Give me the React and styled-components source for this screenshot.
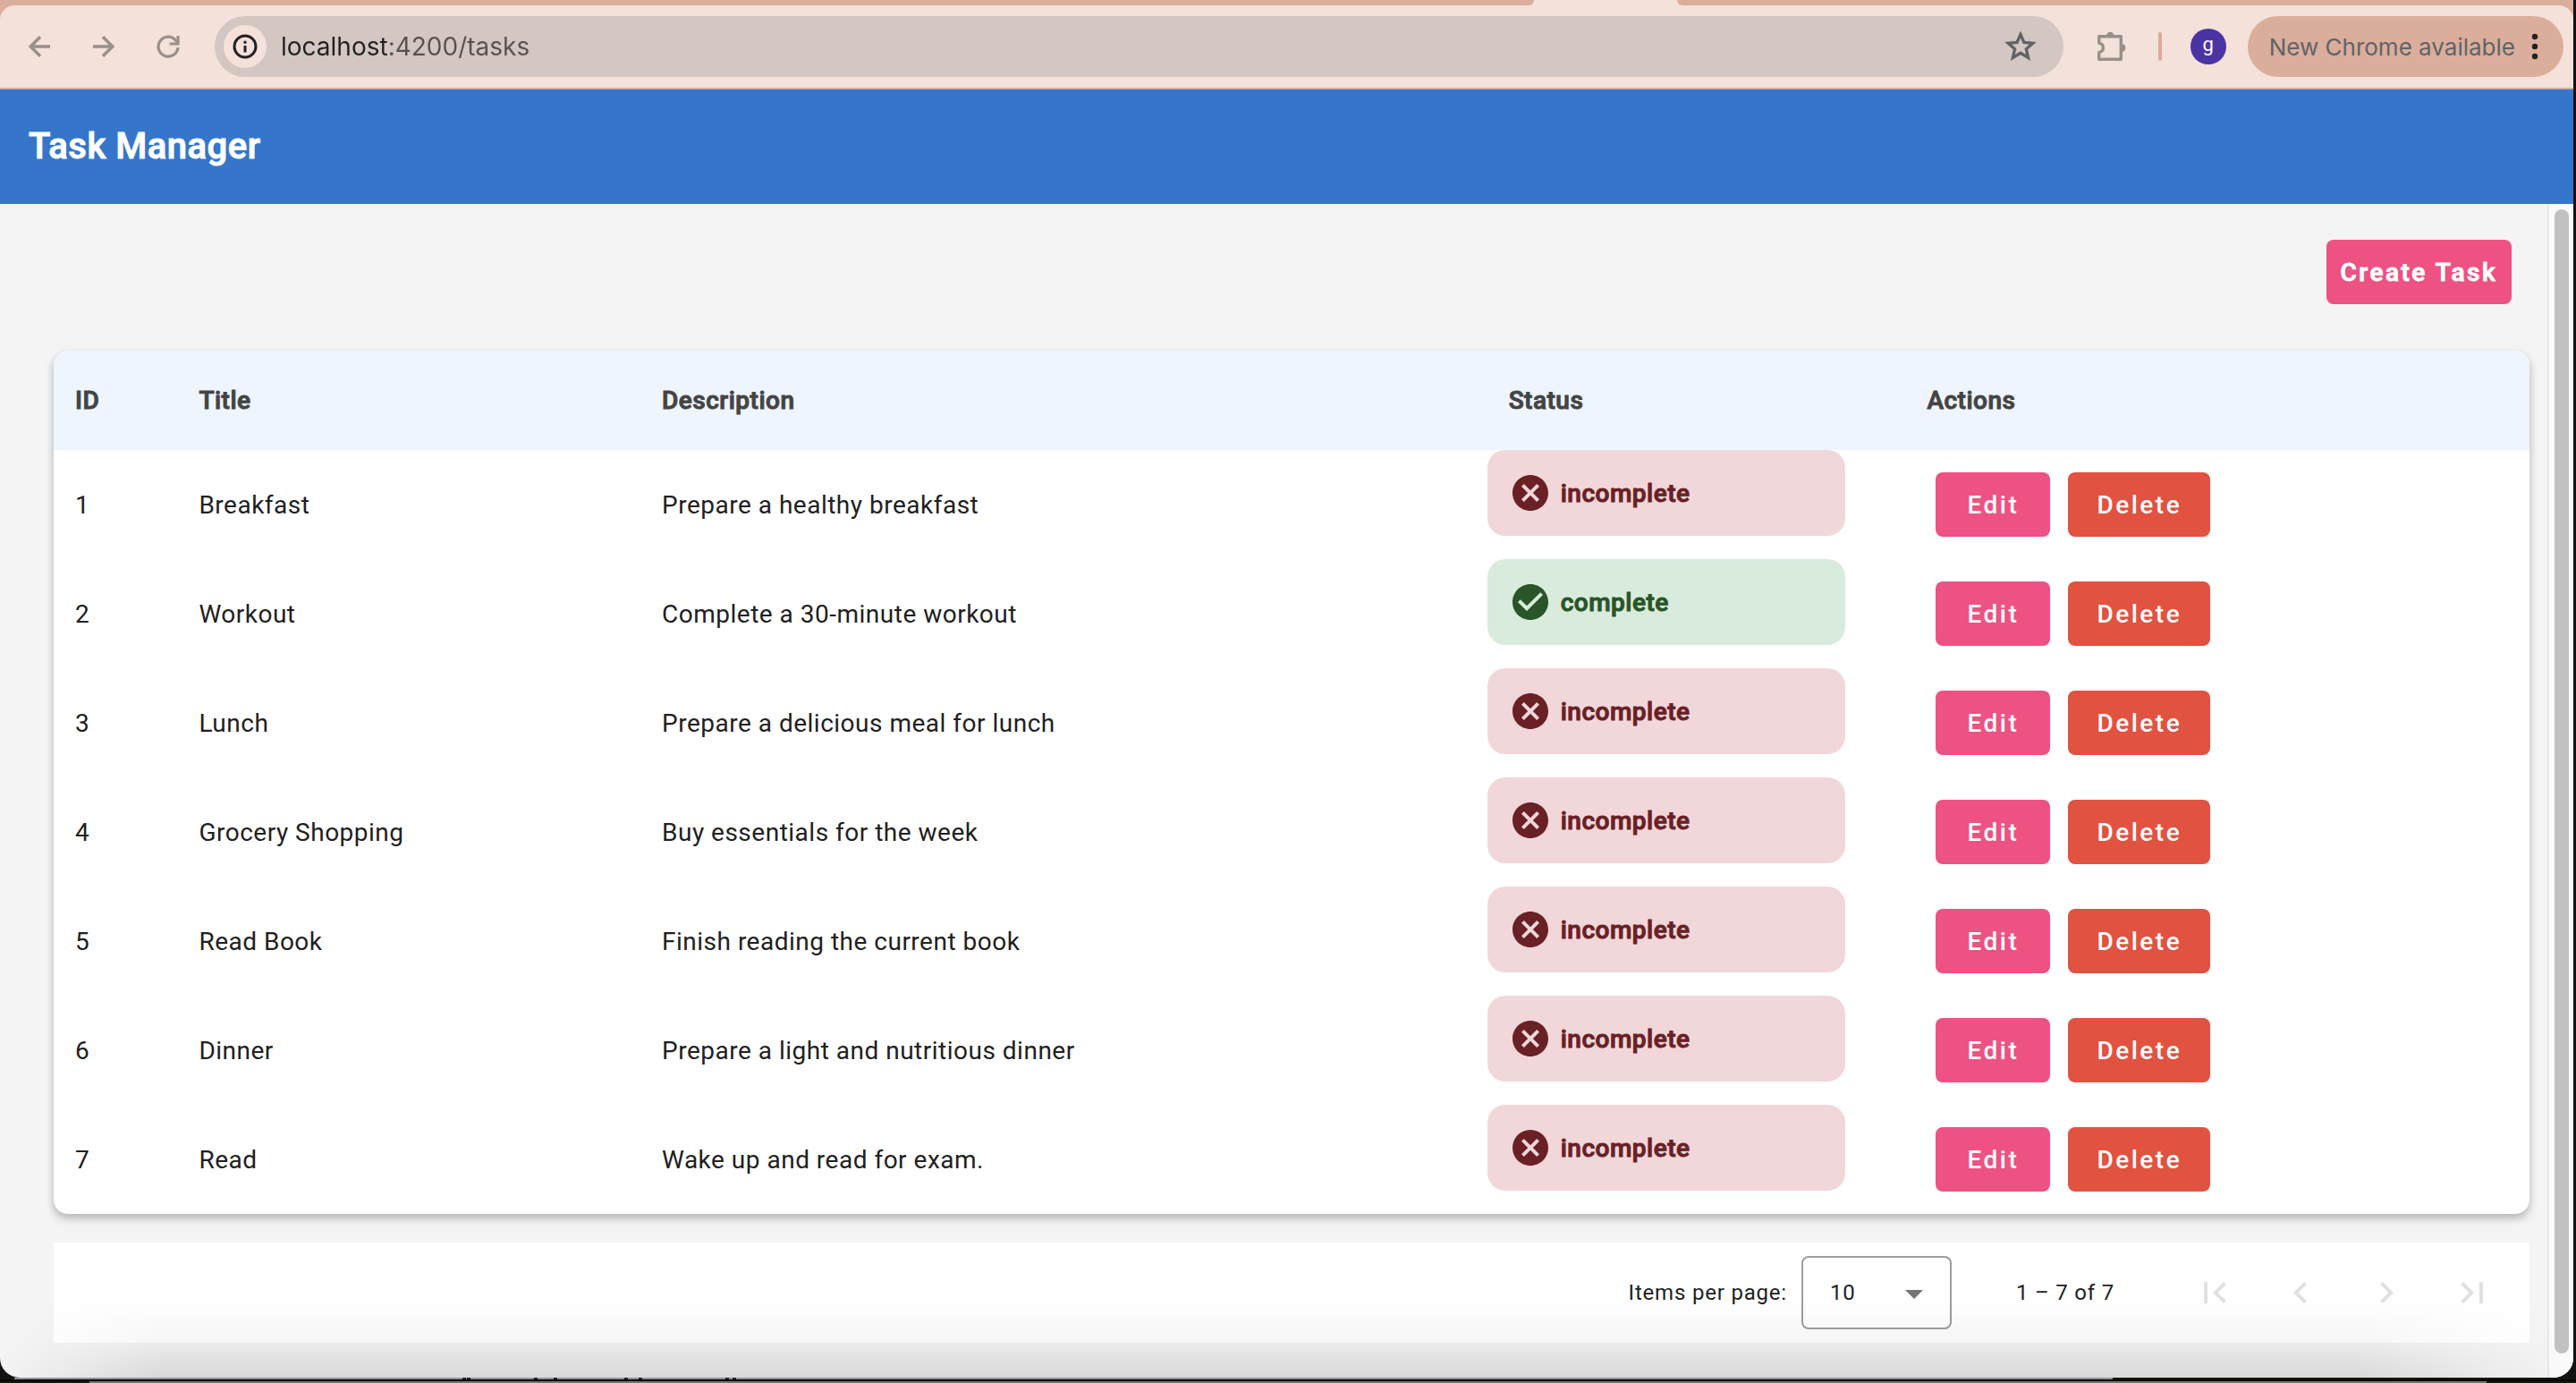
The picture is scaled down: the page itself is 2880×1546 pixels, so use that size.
import React from "react";
import styled, { createGlobalStyle, css } from "styled-components";
import {
  MdCancel,
  MdCheckCircle,
  MdChevronLeft,
  MdChevronRight,
  MdFirstPage,
  MdLastPage,
} from "react-icons/md";

const GlobalStyle = createGlobalStyle`
  *, *::before, *::after { box-sizing: border-box; }
  body {
    margin: 0;
    background: #0b0c08;
    font-family: Roboto, "Liberation Sans", sans-serif;
    color: #212121;
    overflow: hidden;
  }
  button, input, select { font: inherit; margin: 0; }
`;

/* Medium weight thickened by a thin outline in the text colour */
const strong = css`
  font-weight: 500;
  -webkit-text-stroke: 1px currentColor;
`;

const Desktop = styled.div`
  display: flex;
  flex-direction: column;
  min-height: 100vh;
  background: #101214;
`;

const Window = styled.div`
  position: relative;
  flex: 1;
  display: flex;
  flex-direction: column;
  margin-right: 3px;
  border-radius: 0 0 22px 22px;
  overflow: hidden;
  background: #f4f4f4;
`;

/* Browser chrome */

const Chrome = styled.header`
  background: #dbad9b;
`;

const TabStrip = styled.div`
  display: flex;
  gap: 160px;
  height: 6px;
  background: #f3e1da;
`;

const TabSegment = styled.div`
  flex: ${(p) => p.$grow} 1 0;
  background: #dbad9b;
  border-radius: ${(p) => (p.$side === "left" ? "0 0 16px 0" : "0 0 0 16px")};
`;

const Toolbar = styled.div`
  display: flex;
  align-items: center;
  height: 94px;
  padding: 0 11px 0 20px;
  background: #f3e1da;
  border-bottom: 2px solid #c6b3ac;
  border-radius: 16px 16px 0 0;
`;

const NavButtons = styled.div`
  display: flex;
  gap: 24px;
  margin-right: 28px;
`;

const IconButton = styled.button`
  display: grid;
  place-items: center;
  width: 48px;
  height: 48px;
  padding: 0;
  border: 0;
  border-radius: 50%;
  background: ${(p) => p.$background || "transparent"};
  color: ${(p) => p.$color || "#998f8b"};
`;

const AddressBar = styled.div`
  flex: 1;
  display: flex;
  align-items: center;
  gap: 16px;
  height: 68px;
  padding: 0 24px 0 10px;
  border-radius: 34px;
  background: #d4c6c0;
`;

const AddressInput = styled.input`
  flex: 1;
  min-width: 0;
  height: 48px;
  padding: 0;
  border: 0;
  outline: 0;
  font-family: Inter, "Liberation Sans", sans-serif;
  font-size: 28px;
  color: #202124;
  background: linear-gradient(to right, #202124 121px, #575150 121px);
  background-clip: text;
  -webkit-text-fill-color: transparent;
`;

const ToolbarEnd = styled.div`
  display: flex;
  align-items: center;
  gap: 24px;
  margin-left: 30px;
`;

const Divider = styled.span`
  width: 4px;
  height: 32px;
  margin: 0 8px 0 4px;
  border-radius: 2px;
  background: #dbad9b;
`;

const Avatar = styled.button`
  width: 40px;
  height: 40px;
  padding: 0 0 4px;
  border: 0;
  border-radius: 50%;
  background: #4a33a3;
  color: #fff;
  font-size: 22px;
  line-height: 32px;
`;

const UpdateButton = styled.button`
  display: flex;
  align-items: center;
  justify-content: space-between;
  gap: 18px;
  height: 68px;
  padding: 0 28px 0 24px;
  border: 0;
  border-radius: 34px;
  background: #dbad9b;
  color: #5f6368;
  font-family: Inter, "Liberation Sans", sans-serif;
  font-size: 26px;
  white-space: nowrap;
`;

/* Application */

const AppBar = styled.div`
  display: flex;
  align-items: center;
  height: 128px;
  padding: 0 32px;
  background: #3576cb;
  color: #fff;
`;

const AppTitle = styled.h1`
  margin: 0;
  font-size: 40px;
  line-height: 64px;
  letter-spacing: 0.5px;
  ${strong}
`;

const Viewport = styled.div`
  flex: 1;
  display: flex;
`;

const Main = styled.main`
  flex: 1;
  min-width: 0;
  padding: 40px 20px 38px 60px;
`;

const ScrollTrack = styled.div`
  width: 29px;
  display: flex;
  padding: 6px 5px 27px 6px;
  border-left: 2px solid #e8e8e8;
  background: #fafafa;
`;

const ScrollThumb = styled.div`
  flex: 1;
  border-radius: 8px;
  background: #c1c1c1;
`;

const Actions = styled.div`
  display: flex;
  justify-content: flex-end;
  padding: 0 20px;
  margin-bottom: 52px;
`;

const Button = styled.button`
  min-width: 128px;
  height: 72px;
  padding: 0 ${(p) => (p.$strong ? 16 : 32)}px;
  border: 0;
  border-radius: 8px;
  background: ${(p) => (p.$tone === "danger" ? "#e15241" : "#ed5282")};
  color: #fff;
  font-size: 28px;
  font-weight: 500;
  letter-spacing: 2.5px;
  white-space: nowrap;
  ${(p) => p.$strong && strong}
`;

const Card = styled.div`
  border-radius: 16px;
  overflow: hidden;
  background: #fff;
  box-shadow: 0 4px 8px rgba(0, 0, 0, 0.16), 0 6px 12px rgba(0, 0, 0, 0.12);
`;

const Table = styled.table`
  width: 100%;
  border-collapse: collapse;
  table-layout: fixed;
`;

const Column = styled.col`
  width: ${(p) => p.$width};
`;

const HeadCell = styled.th`
  height: 111px;
  padding: 0 24px;
  background: #eef5fd;
  color: #444;
  font-size: 28px;
  letter-spacing: 0.5px;
  text-align: left;
  ${strong}
`;

const Cell = styled.td`
  height: 122px;
  padding: 0 24px;
  font-size: 28px;
  letter-spacing: 0.5px;
`;

const StatusCell = styled.td`
  padding: 0;
  vertical-align: top;
`;

const tones = {
  complete: { background: "#d9ebdc", color: "#295528" },
  incomplete: { background: "#f2d7da", color: "#692125" },
};

const StatusChip = styled.div`
  display: flex;
  align-items: center;
  gap: 10px;
  max-width: 400px;
  height: 96px;
  padding: 0 24px;
  border-radius: 20px;
  background: ${(p) => tones[p.$status].background};
  color: ${(p) => tones[p.$status].color};
  font-size: 28px;
  letter-spacing: 0.5px;
  ${strong}
`;

const RowActions = styled.div`
  display: flex;
  gap: 20px;
  padding: 0 10px;
`;

const Paginator = styled.nav`
  display: flex;
  align-items: center;
  justify-content: flex-end;
  height: 112px;
  margin-top: 32px;
  padding-right: 16px;
  background: #fff;
  font-size: 24px;
  letter-spacing: 0.8px;
`;

const PageSize = styled.div`
  display: flex;
  align-items: center;
  gap: 16px;
  margin-right: 72px;
`;

const SelectBox = styled.div`
  position: relative;
`;

const Select = styled.select`
  width: 168px;
  height: 82px;
  padding: 0 30px;
  border: 2px solid #9e9e9e;
  border-radius: 8px;
  appearance: none;
  background: #fff;
  color: #212121;
  letter-spacing: 0.8px;
`;

const SelectArrow = styled.svg`
  position: absolute;
  top: 38px;
  right: 32px;
  pointer-events: none;
`;

const RangeLabel = styled.span`
  margin-right: 64px;
`;

const PageButton = styled.button`
  display: grid;
  place-items: center;
  width: 96px;
  height: 96px;
  padding: 0;
  border: 0;
  background: transparent;
  color: #e0e0e0;
`;

const BottomShade = styled.div`
  position: absolute;
  left: 0;
  right: 0;
  bottom: 0;
  height: 90px;
  pointer-events: none;
  background: linear-gradient(
    to bottom,
    rgba(0, 0, 0, 0) 0%,
    rgba(0, 0, 0, 0.036) 56%,
    rgba(0, 0, 0, 0.11) 100%
  );
  mask-image: linear-gradient(
    to right,
    transparent 0,
    #000 180px,
    #000 calc(100% - 240px),
    transparent calc(100% - 10px)
  );
`;

const Behind = styled.footer`
  height: 6px;
  background: #17160d;
`;

const BehindEdge = styled.div`
  height: 2px;
  margin: ${(p) => p.$margin};
  background: ${(p) => p.$color};
`;

const BehindMarks = styled.svg`
  display: block;
`;

const tasks = [
  { id: 1, title: "Breakfast", description: "Prepare a healthy breakfast", status: "incomplete" },
  { id: 2, title: "Workout", description: "Complete a 30-minute workout", status: "complete" },
  { id: 3, title: "Lunch", description: "Prepare a delicious meal for lunch", status: "incomplete" },
  { id: 4, title: "Grocery Shopping", description: "Buy essentials for the week", status: "incomplete" },
  { id: 5, title: "Read Book", description: "Finish reading the current book", status: "incomplete" },
  { id: 6, title: "Dinner", description: "Prepare a light and nutritious dinner", status: "incomplete" },
  { id: 7, title: "Read", description: "Wake up and read for exam.", status: "incomplete" },
];

const columns = [
  { name: "ID", width: "5%" },
  { name: "Title", width: "18.7%" },
  { name: "Description", width: "34.2%" },
  { name: "Status", width: "16.9%" },
  { name: "Actions", width: "25.2%" },
];

const ArrowIcon = ({ forward }) => (
  <svg width="24" height="24" viewBox="0 0 24 24" fill="none" stroke="currentColor" strokeWidth="3.4">
    {forward ? <path d="M0 12h22M11 1.2L21.8 12L11 22.8" /> : <path d="M24 12H2M13 1.2L2.2 12L13 22.8" />}
  </svg>
);

const ReloadIcon = () => (
  <svg width="28" height="28" viewBox="0 0 28 28" fill="none" stroke="currentColor" strokeWidth="3.2">
    <path d="M25 15.2A11 11 0 1 1 22.6 7.2L24.4 9.6" />
    <path d="M25 2v9H15.6" />
  </svg>
);

const InfoIcon = () => (
  <svg width="28" height="28" viewBox="0 0 28 28" fill="none" stroke="currentColor">
    <circle cx="14" cy="14" r="12" strokeWidth="3" />
    <path d="M14 13v7.4M14 7.8v3" strokeWidth="3" />
  </svg>
);

const StarIcon = () => (
  <svg width="36" height="34" viewBox="0 0 36 34" fill="none" stroke="currentColor" strokeWidth="3">
    <path d="M18 5.2L21.5 13.2L30.3 14L23.7 19.8L25.7 28.4L18 23.8L10.3 28.4L12.3 19.8L5.7 14L14.5 13.2Z" transform="translate(-2.2 -2.4) scale(1.12)" />
  </svg>
);

const ExtensionIcon = () => (
  <svg width="36" height="36" viewBox="0 0 36 36" fill="none" stroke="currentColor" strokeWidth="3.4" strokeLinejoin="round">
    <path d="M3.7 6.7H28.3V32.3H3.7V24.6C7.6 23.6 8.4 21.8 8.4 19.4C8.4 17 7.4 15 3.7 14.2Z" />
    <path d="M12 6a4.2 4.2 0 0 1 8.4 0ZM29 15a4 4 0 0 1 0 9Z" fill="currentColor" stroke="none" />
  </svg>
);

const DotsIcon = () => (
  <svg width="8" height="30" viewBox="0 0 8 30" fill="#202124">
    <circle cx="4" cy="4" r="3.2" />
    <circle cx="4" cy="15" r="3.2" />
    <circle cx="4" cy="26" r="3.2" />
  </svg>
);

export default function App() {
  return (
    <Desktop>
      <GlobalStyle />
      <Window>
        <Chrome>
          <TabStrip>
            <TabSegment $grow={1715} $side="left" />
            <TabSegment $grow={1002} $side="right" />
          </TabStrip>
          <Toolbar>
            <NavButtons>
              <IconButton aria-label="Back"><ArrowIcon /></IconButton>
              <IconButton aria-label="Forward"><ArrowIcon forward /></IconButton>
              <IconButton aria-label="Reload"><ReloadIcon /></IconButton>
            </NavButtons>
            <AddressBar>
              <IconButton aria-label="Site information" $background="#f3e1da" $color="#202124">
                <InfoIcon />
              </IconButton>
              <AddressInput aria-label="Address" defaultValue="localhost:4200/tasks" />
              <IconButton aria-label="Bookmark this page" $color="#5f6368"><StarIcon /></IconButton>
            </AddressBar>
            <ToolbarEnd>
              <IconButton aria-label="Extensions"><ExtensionIcon /></IconButton>
              <Divider />
              <Avatar aria-label="Profile">g</Avatar>
              <UpdateButton>
                New Chrome available
                <DotsIcon />
              </UpdateButton>
            </ToolbarEnd>
          </Toolbar>
        </Chrome>
        <AppBar>
          <AppTitle>Task Manager</AppTitle>
        </AppBar>
        <Viewport>
          <Main>
            <Actions>
              <Button $strong>Create Task</Button>
            </Actions>
            <Card>
              <Table>
                <colgroup>
                  {columns.map((c) => (
                    <Column key={c.name} $width={c.width} />
                  ))}
                </colgroup>
                <thead>
                  <tr>
                    {columns.map((c) => (
                      <HeadCell key={c.name} scope="col">{c.name}</HeadCell>
                    ))}
                  </tr>
                </thead>
                <tbody>
                  {tasks.map((t) => (
                    <tr key={t.id}>
                      <Cell>{t.id}</Cell>
                      <Cell>{t.title}</Cell>
                      <Cell>{t.description}</Cell>
                      <StatusCell>
                        <StatusChip $status={t.status}>
                          {t.status === "complete" ? (
                            <MdCheckCircle size={48} strokeWidth={0} />
                          ) : (
                            <MdCancel size={48} strokeWidth={0} />
                          )}
                          {t.status}
                        </StatusChip>
                      </StatusCell>
                      <Cell>
                        <RowActions>
                          <Button>Edit</Button>
                          <Button $tone="danger">Delete</Button>
                        </RowActions>
                      </Cell>
                    </tr>
                  ))}
                </tbody>
              </Table>
            </Card>
            <Paginator aria-label="Pagination">
              <PageSize>
                <label htmlFor="page-size">Items per page:</label>
                <SelectBox>
                  <Select id="page-size" defaultValue="10">
                    <option>10</option>
                  </Select>
                  <SelectArrow width="20" height="10" viewBox="0 0 20 10" fill="#757575">
                    <path d="M0 0h20L10 10z" />
                  </SelectArrow>
                </SelectBox>
              </PageSize>
              <RangeLabel>1 – 7 of 7</RangeLabel>
              <PageButton aria-label="First page" disabled><MdFirstPage size={48} /></PageButton>
              <PageButton aria-label="Previous page" disabled><MdChevronLeft size={48} /></PageButton>
              <PageButton aria-label="Next page" disabled><MdChevronRight size={48} /></PageButton>
              <PageButton aria-label="Last page" disabled><MdLastPage size={48} /></PageButton>
            </Paginator>
          </Main>
          <ScrollTrack>
            <ScrollThumb />
          </ScrollTrack>
        </Viewport>
        <BottomShade />
      </Window>
      <Behind>
        <BehindEdge $color="#929293" $margin="0 18% 0 16px">
          <BehindMarks width="840" height="2" viewBox="0 0 840 2" fill="#222">
            <path d="M501 0h4v2h-4zM506 0h4v2h-4zM581 0h4v2h-4zM603 0h4v2h-4zM682 0h4v2h-4zM698 0h4v2h-4zM795 0h4v2h-4zM803 0h4v2h-4z" />
          </BehindMarks>
        </BehindEdge>
        <BehindEdge $color="#060704" $margin="0" />
        <BehindEdge $color="#78746f" $margin="0 100px" />
      </Behind>
    </Desktop>
  );
}
